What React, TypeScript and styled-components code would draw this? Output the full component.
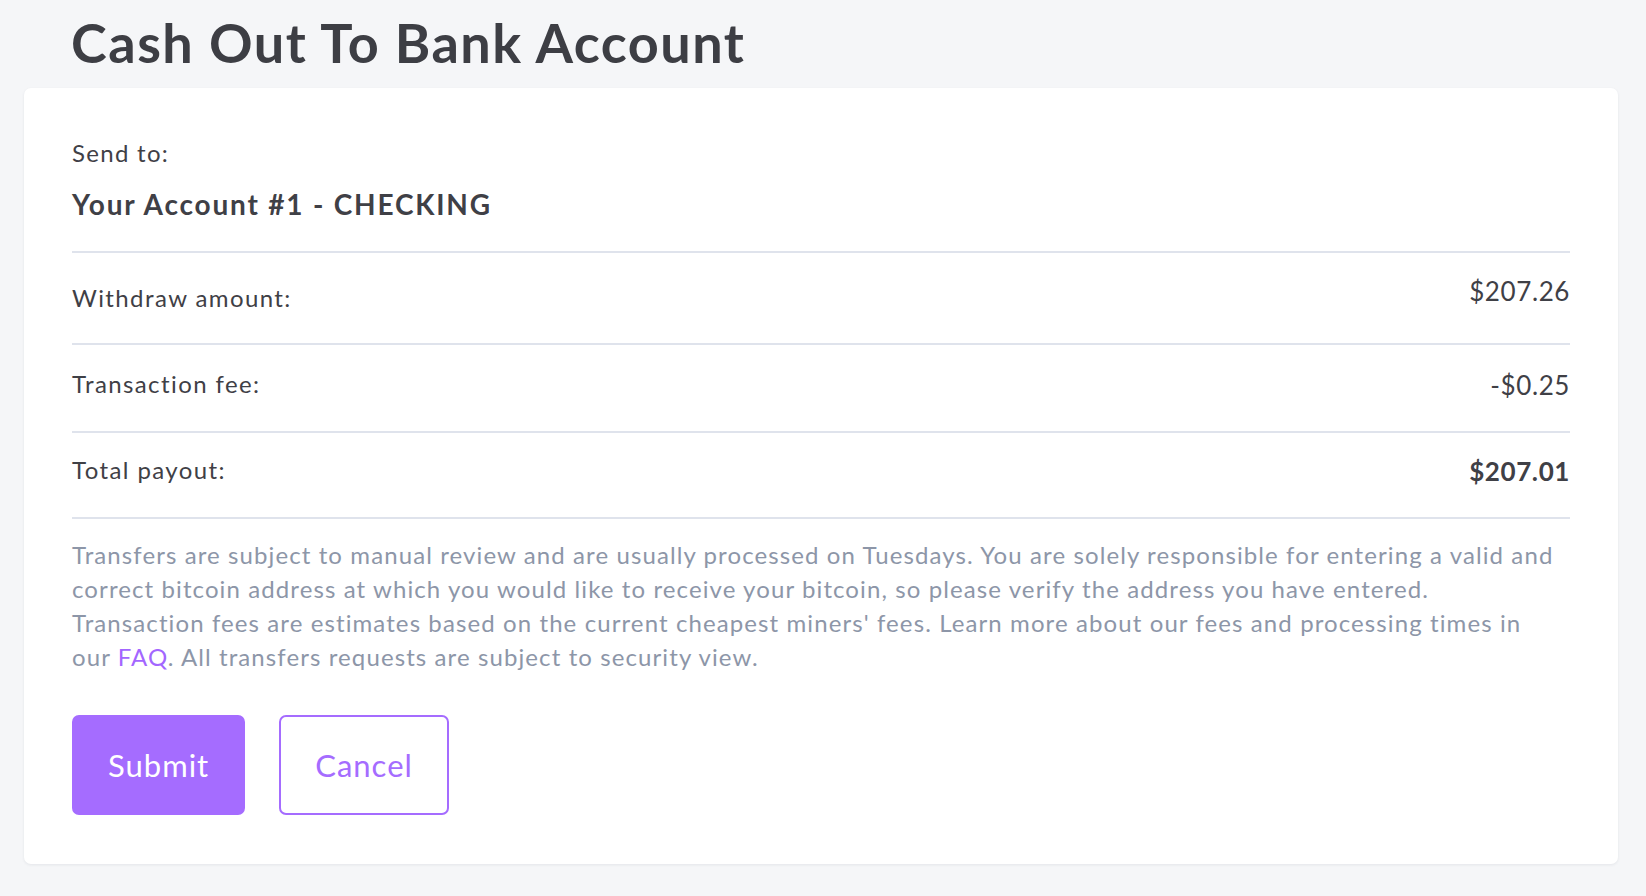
import styled, { createGlobalStyle } from "styled-components";

const GlobalStyle = createGlobalStyle`
  html, body {
    margin: 0;
    padding: 0;
    background: #f5f6f8;
  }
  body {
    font-family: Lato, "Liberation Sans", sans-serif;
    color: #3f4046;
  }
`;

const Page = styled.div`
  padding: 0 28px 0 24px;
  min-height: 896px;
  box-sizing: border-box;
`;

const Title = styled.h1`
  margin: 0;
  padding: 8px 0 0 47px;
  height: 88px;
  box-sizing: border-box;
  font-size: 54px;
  line-height: 70px;
  font-weight: 700;
  color: #3d3e44;
  letter-spacing: 1.5px;
`;

const Card = styled.div`
  background: #fff;
  border-radius: 7px;
  box-shadow: 0 1px 3px rgba(30, 40, 60, 0.08);
  padding: 48px 48px 49px;
`;

const Label = styled.div`
  font-size: 24px;
  line-height: 34px;
  letter-spacing: 1.3px;
`;

const Account = styled.div`
  font-size: 28px;
  line-height: 36px;
  font-weight: 700;
  letter-spacing: 1.8px;
  margin: 16px 0 29px;
`;

const Row = styled.div<{ $h: number; $top: number }>`
  display: flex;
  justify-content: space-between;
  align-items: baseline;
  box-sizing: border-box;
  border-top: 2px solid #dfe3ec;
  height: ${(p) => p.$h}px;
  padding-top: ${(p) => p.$top}px;
  font-size: 24px;
  letter-spacing: 1.4px;
`;

const Amount = styled.span<{ $bold?: boolean; $shift?: number }>`
  font-size: 26px;
  letter-spacing: 0.6px;
  font-weight: ${(p) => (p.$bold ? 700 : 400)};
  position: relative;
  top: ${(p) => p.$shift ?? 0}px;
`;

const Divider = styled.div`
  border-top: 2px solid #dfe3ec;
`;

const Note = styled.p`
  margin: 0;
  max-width: 1484px;
  padding-top: 19px;
  font-size: 24px;
  line-height: 34px;
  letter-spacing: 1.1px;
  color: #8d96a8;
`;

const Link = styled.a`
  color: #a366ff;
  text-decoration: none;
`;

const Actions = styled.div`
  display: flex;
  gap: 34px;
  margin-top: 41px;
`;

const Button = styled.button<{ $outline?: boolean }>`
  height: 100px;
  padding: 0 34px;
  border-radius: 7px;
  font-family: inherit;
  font-size: 31px;
  letter-spacing: 1px;
  cursor: pointer;
  border: 2px solid #a56cff;
  background: ${(p) => (p.$outline ? "#fff" : "#a56cff")};
  color: ${(p) => (p.$outline ? "#a56cff" : "#fff")};
`;

export default function App() {
  return (
    <>
      <GlobalStyle />
      <Page>
        <Title>Cash Out To Bank Account</Title>
        <Card>
          <Label>Send to:</Label>
          <Account>Your Account #1 - CHECKING</Account>
          <Row $h={92} $top={28}>
            <span>Withdraw amount:</span>
            <Amount $shift={-6}>$207.26</Amount>
          </Row>
          <Row $h={88} $top={22}>
            <span>Transaction fee:</span>
            <Amount $shift={2}>-$0.25</Amount>
          </Row>
          <Row $h={86} $top={20}>
            <span>Total payout:</span>
            <Amount $bold $shift={2}>
              $207.01
            </Amount>
          </Row>
          <Divider />
          <Note>
            Transfers are subject to manual review and are usually processed on
            Tuesdays. You are solely responsible for entering a valid and correct
            bitcoin address at which you would like to receive your bitcoin, so
            please verify the address you have entered.
            <br />
            Transaction fees are estimates based on the current cheapest miners'
            fees. Learn more about our fees and processing times in our{" "}
            <Link href="#">FAQ</Link>. All transfers requests are subject to
            security view.
          </Note>
          <Actions>
            <Button>Submit</Button>
            <Button $outline>Cancel</Button>
          </Actions>
        </Card>
      </Page>
    </>
  );
}
